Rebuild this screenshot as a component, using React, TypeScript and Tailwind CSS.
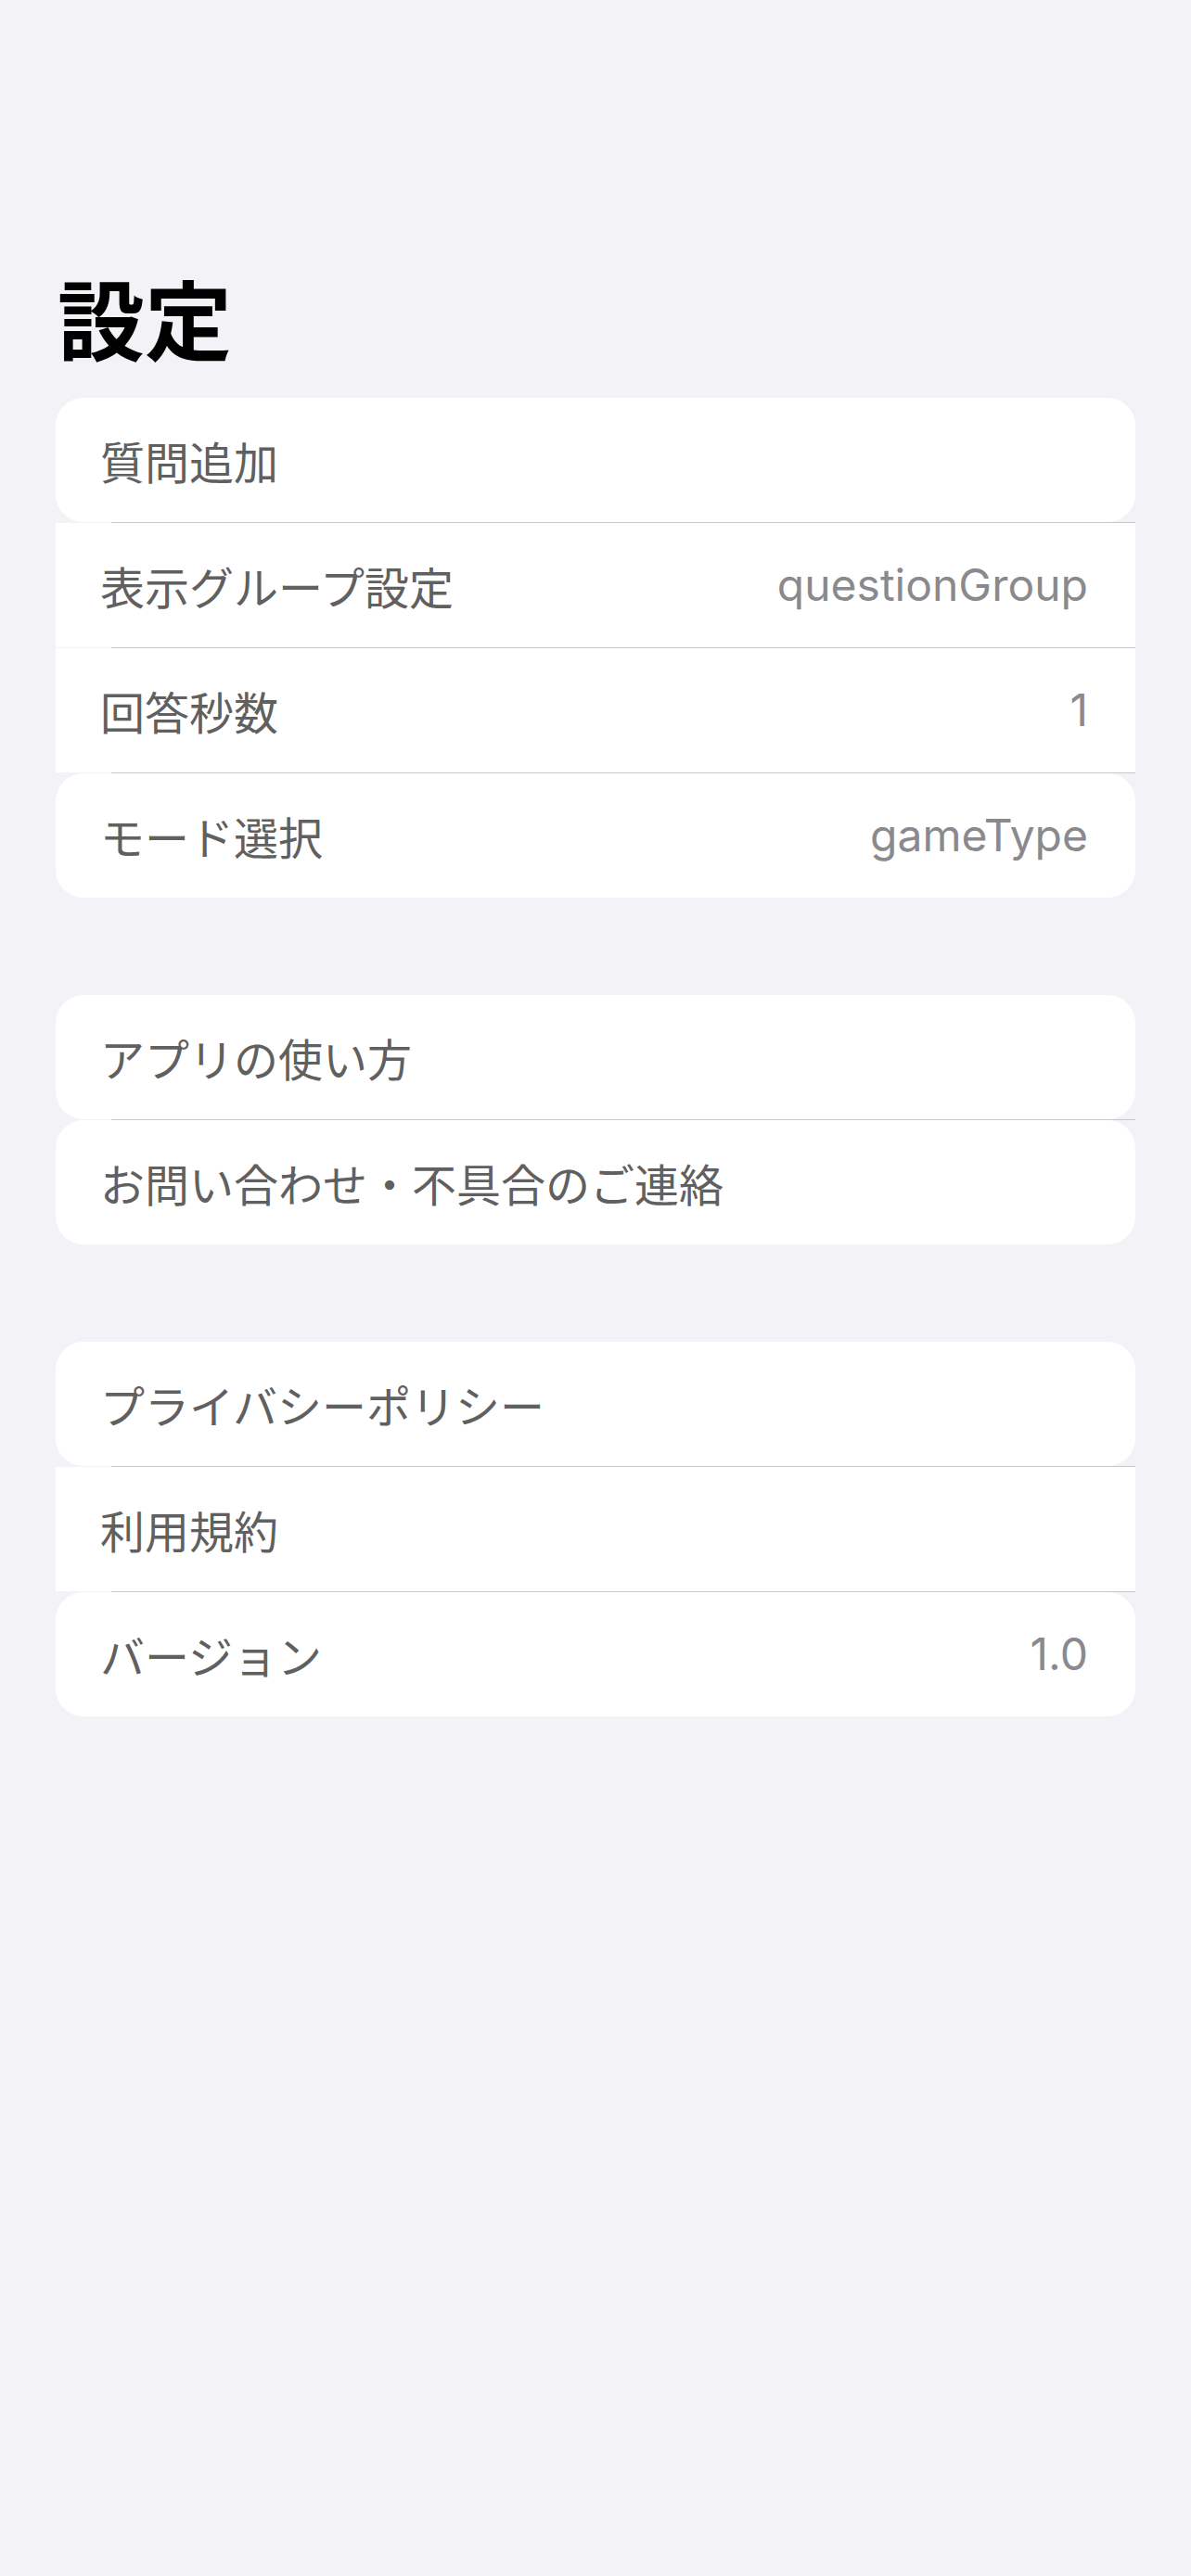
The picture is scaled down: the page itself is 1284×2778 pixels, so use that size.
import React from "react";

type Row = { label: string; value?: string };

const groups: Row[][] = [
  [
    { label: "質問追加" },
    { label: "表示グループ設定", value: "questionGroup" },
    { label: "回答秒数", value: "1" },
    { label: "モード選択", value: "gameType" },
  ],
  [{ label: "アプリの使い方" }, { label: "お問い合わせ・不具合のご連絡" }],
  [{ label: "プライバシーポリシー" }, { label: "利用規約" }, { label: "バージョン", value: "1.0" }],
];

function Group({ rows }: { rows: Row[] }) {
  return (
    <div className="flex flex-col">
      {rows.map((r, i) => {
        const edge = i === 0 || i === rows.length - 1;
        return (
          <React.Fragment key={r.label}>
            {i > 0 && <div className="h-px ml-[60px] bg-[#c8c8cc]" />}
            <div
              className={
                edge
                  ? "h-[134px] bg-white rounded-[30px] flex items-center justify-between px-12"
                  : "h-[134px] bg-white flex items-center justify-between px-12"
              }
            >
              <span className="text-[48px] leading-none text-[#606060] font-['Noto_Sans_CJK_JP',sans-serif]">
                {r.label}
              </span>
              {r.value && (
                <span className="text-[48px] leading-none text-[#8a8a8e] font-['Inter','Noto_Sans_CJK_JP',sans-serif] pr-[3px]">
                  {r.value}
                </span>
              )}
            </div>
          </React.Fragment>
        );
      })}
    </div>
  );
}

export default function App() {
  return (
    <div className="min-h-[2778px] w-full bg-[#f2f2f7] font-['Noto_Sans_CJK_JP',sans-serif]">
      <div className="px-[60px] pt-[294px]">
        <h1 className="text-[94px] leading-none font-bold text-black ml-[2px] font-['Noto_Sans_CJK_JP',sans-serif]">
          設定
        </h1>
        <div className="mt-[41px] flex flex-col gap-[105px]">
          {groups.map((g, i) => (
            <Group key={i} rows={g} />
          ))}
        </div>
      </div>
    </div>
  );
}
